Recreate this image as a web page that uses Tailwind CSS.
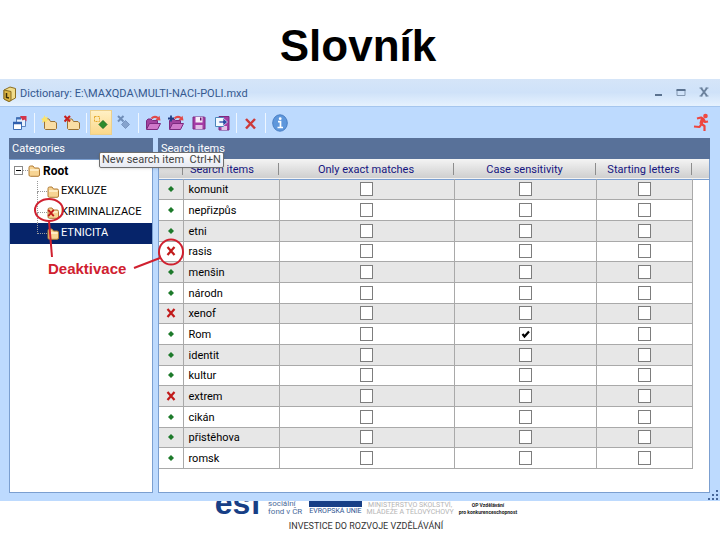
<!DOCTYPE html>
<html lang="cs">
<head>
  <meta charset="UTF-8">
  <meta name="viewport" content="width=device-width, initial-scale=1">
  <title>Slovník</title>

  <!-- Tailwind CSS -->
  <script src="https://cdn.jsdelivr.net/npm/@tailwindcss/browser@4"></script>
</head>
<body class="bg-white text-black font-['Roboto',sans-serif] text-[11px] min-h-screen flex flex-col">

  <!-- Icons used more than once -->
  <svg class="hidden" xmlns="http://www.w3.org/2000/svg">
    <symbol id="icon-folder" viewBox="0 0 12 12">
      <path d="M1 2.500 Q1 1 2.500 1 H5 L6.500 3 H10 Q11.500 3 11.500 4.500 V10 Q11.500 11.300 10 11.300 H2.500 Q1 11.300 1 10 Z" fill="#f7d493" stroke="#b07a35" stroke-width="1"/>
      <path d="M2 5 H10.500" stroke="#fff3d4" stroke-width="1.500"/>
    </symbol>
    <symbol id="icon-cross" viewBox="0 0 10 10">
      <path d="M1.500 1 L8.500 9 M8.500 1 L1.500 9" stroke="#c11a1a" stroke-width="2.200" fill="none"/>
    </symbol>
    <symbol id="icon-open" viewBox="0 0 16 16">
      <path d="M1.500 14 V5.500 L3 4 H6 L7.500 5.500 H12.500 V8" fill="#a243a0" stroke="#7d2a80"/>
      <path d="M1.500 14.500 L4.500 8.500 H15.500 L12.500 14.500 Z" fill="#cf79ca" stroke="#7d2a80"/>
      <path d="M6.500 3.500 Q9.500 0.500 13 3" fill="none" stroke="#e04a4a" stroke-width="2"/>
      <path d="M10.500 5 L15.500 5.500 L14.500 0.800 Z" fill="#e04a4a"/>
    </symbol>
  </svg>

  <header class="h-[79px] pt-5 pr-1">
    <h1 class="font-['Liberation_Sans',sans-serif] font-bold text-[44px] leading-[52px] text-center">Slovník</h1>
  </header>

  <!-- Dictionary window -->
  <main class="relative flex-1 flex flex-col bg-[#bddafe]">

    <!-- Title bar -->
    <div class="h-7 flex items-center pt-[2px] pl-[3px] pr-[10px] border-b border-[#a5c6ee] bg-linear-to-b from-[#d5e5f8] via-[#cfe2f9] to-[#e6f2fe] text-[#35598f]">
      <svg class="w-[13px] h-4" viewBox="0 0 13 16" aria-hidden="true">
        <path d="M1 4 L7 1 L12.500 2.500 V12 L6 15.500 L1 13 Z" fill="#f0dc8a" stroke="#8a6d22"/>
        <path d="M1 4 L8 5.500 V14.500 L6 15.500 L1 13 Z" fill="#dcb545" stroke="#8a6d22"/>
        <path d="M3.500 7 V11.500 L6 12" fill="none" stroke="#3a2d0a" stroke-width="1.500"/>
      </svg>
      <span class="ml-1 text-[11px] leading-4">Dictionary: E:\MAXQDA\MULTI-NACI-POLI.mxd</span>
      <div class="ml-auto flex gap-[11px] pb-1">
        <button class="w-3 h-3" aria-label="Minimize">
          <svg viewBox="0 0 12 12"><path d="M3 9 H10" stroke="#5b728f" stroke-width="2"/></svg>
        </button>
        <button class="w-3 h-3" aria-label="Maximize">
          <svg viewBox="0 0 12 12"><path d="M2 4 H10 V9.500 H2 Z" fill="none" stroke="#8397b0"/><path d="M1.500 4 H10.500" stroke="#5b728f" stroke-width="2"/></svg>
        </button>
        <button class="w-3 h-3" aria-label="Close">
          <svg viewBox="0 0 12 12"><path d="M3 2 L9 10 M9 2 L3 10" stroke="#6b819c" stroke-width="2"/><path d="M1.500 2 H4.500 M7.500 2 H10.500 M1.500 10 H4.500 M7.500 10 H10.500" stroke="#6b819c"/></svg>
        </button>
      </div>
    </div>

    <!-- Toolbar -->
    <div class="h-[31px] flex items-center gap-px pl-[9px] pr-[11px]">
      <button class="w-[22px] h-6 grid place-items-center" aria-label="Windows">
        <svg class="w-4 h-4" viewBox="0 0 16 16">
          <path d="M4.500 2.500 H13.500 V11.500 H4.500 Z" fill="#e8f1fc" stroke="#5b83c0"/><path d="M4 3.500 H9" stroke="#3f6fb5" stroke-width="2"/>
          <path d="M1.500 7.500 H9.500 V14.500 H1.500 Z" fill="#fff" stroke="#3f6fb5"/><path d="M1 8 H10" stroke="#2f5fae" stroke-width="2.500"/>
          <path d="M8 1 H14.500 V6.500 L12.500 4.500 L10.500 5.500 Z" fill="#d3344a"/>
        </svg>
      </button>
      <span class="w-px h-5 mx-[2px] bg-[#eef6ff]"></span>
      <button class="w-[22px] h-6 grid place-items-center" aria-label="New category">
        <svg class="w-4 h-4" viewBox="0 0 16 16">
          <path d="M3.500 5.500 L4.500 4 H8 L9.500 6.500 H14 L15.500 8 V13.500 L14.500 14.500 H4.500 L3.500 13.500 Z" fill="#f9dda5" stroke="#9a7134"/>
          <path d="M3.500 0 L4.500 2.500 L7 1.500 L6 4 L8 5 L5.500 6 L5.500 8 L3.500 6.500 L1 8 L1.800 5.500 L0 4 L2.300 3 Z" fill="#fbe36c"/>
        </svg>
      </button>
      <button class="w-[22px] h-6 grid place-items-center" aria-label="Delete category">
        <svg class="w-4 h-4" viewBox="0 0 16 16">
          <path d="M3.500 5.500 L4.500 4 H8 L9.500 6.500 H14 L15.500 8 V13.500 L14.500 14.500 H4.500 L3.500 13.500 Z" fill="#f9dda5" stroke="#9a7134"/>
          <path d="M0.500 1 L6 6.500 M6 1 L0.500 6.500" stroke="#c8201f" stroke-width="2.200"/>
        </svg>
      </button>
      <span class="w-px h-5 mx-[2px] bg-[#eef6ff]"></span>
      <button class="w-[22px] h-[25px] grid place-items-center border border-[#ecd08c] bg-linear-to-b from-[#fff0c4] to-[#fbd88a]" aria-label="New search item">
        <svg class="w-4 h-4" viewBox="0 0 16 16">
          <path d="M1.500 1.500 H6.500 V6.500 H1.500 Z" fill="none" stroke="#e5a92c" stroke-dasharray="2 1"/>
          <path d="M10 5.500 L14 9.500 L10 13.500 L6 9.500 Z" fill="#2c8c2c" stroke="#1c6e22"/>
        </svg>
      </button>
      <button class="w-[22px] h-6 grid place-items-center" aria-label="Delete search item">
        <svg class="w-4 h-4" viewBox="0 0 16 16">
          <path d="M2 1 L7.500 6.500 M7.500 1 L2 6.500" stroke="#6f8db8" stroke-width="2"/>
          <path d="M9.500 5.500 L13.500 9.500 L9.500 13.500 L5.500 9.500 Z" fill="#86a3cd" stroke="#7894c0"/>
        </svg>
      </button>
      <span class="w-px h-5 mx-[2px] bg-[#eef6ff]"></span>
      <button class="w-[22px] h-6 grid place-items-center" aria-label="Open dictionary">
        <svg class="w-4 h-4"><use href="#icon-open"/></svg>
      </button>
      <button class="w-[22px] h-6 grid place-items-center" aria-label="Add dictionary">
        <svg class="w-4 h-4" viewBox="0 0 16 16">
          <use href="#icon-open"/>
          <path d="M0 3.500 H6 M3 0.500 V6.500" stroke="#1f3f86" stroke-width="1.800"/>
        </svg>
      </button>
      <button class="w-[22px] h-6 grid place-items-center" aria-label="Save">
        <svg class="w-4 h-4" viewBox="0 0 16 16">
          <path d="M2 2 H13.500 L14 2.500 V14 H2 Z" fill="#a53ca6" stroke="#7d2a80"/>
          <path d="M4.500 2 H11.500 V7.500 H4.500 Z" fill="#f7ecf8"/><path d="M9 2.500 H10.500 V5.500 H9 Z" fill="#6a1670"/>
          <path d="M4.500 10 H11.500 V14 H4.500 Z" fill="#e3c0e6"/>
        </svg>
      </button>
      <button class="w-[22px] h-6 grid place-items-center" aria-label="Save as">
        <svg class="w-4 h-4" viewBox="0 0 16 16">
          <path d="M5 1.500 H15 V15 H5 Z" fill="#a53ca6" stroke="#7d2a80"/>
          <path d="M7.500 11 H13 V15 H7.500 Z" fill="#e3c0e6"/>
          <path d="M1.500 2.500 H9.500 V11.500 H1.500 Z" fill="#f5faff" stroke="#4b86b9"/>
          <path d="M5 6 H9 V3 L13.500 7 L9 11 V8 H5 Z" fill="#2c4ba4" stroke="#e8f1fc" stroke-width="0.700"/>
        </svg>
      </button>
      <span class="w-px h-5 mx-[2px] bg-[#eef6ff]"></span>
      <button class="w-[22px] h-6 grid place-items-center" aria-label="Delete">
        <svg class="w-4 h-4" viewBox="0 0 16 16"><path d="M3 4 L12 13.500 M12 4 L3 13.500" stroke="#cc3a3a" stroke-width="2.500"/></svg>
      </button>
      <span class="w-px h-5 mx-[2px] bg-[#eef6ff]"></span>
      <button class="w-[22px] h-6 grid place-items-center" aria-label="Info">
        <svg class="w-4 h-[18px]" viewBox="0 0 16 18">
          <ellipse cx="8" cy="9" rx="7.300" ry="8.200" fill="#5e97dc" stroke="#4a7fc4"/>
          <circle cx="8.200" cy="4.700" r="1.400" fill="#fff"/>
          <path d="M6 7.700 H8.500 V13.500 M5.500 13.500 H11" stroke="#fff" stroke-width="1.700" fill="none"/>
        </svg>
      </button>
      <button class="ml-auto w-4 h-5" aria-label="Run">
        <svg viewBox="0 0 16 20">
          <circle cx="12.500" cy="3" r="2.300" fill="#f04a42"/>
          <path d="M4 5.500 L8 4.500 L10.500 6 L8.500 11 L11.500 13 L11.500 18 M10.500 6 L12 9 L15 8.500 M8.500 11 L6.500 14 L1 13.500" stroke="#ee453e" stroke-width="2.200" fill="none" stroke-linejoin="round"/>
          <path d="M9.500 6 L8 11" stroke="#ee453e" stroke-width="3.500"/>
        </svg>
      </button>
    </div>

    <!-- Panels -->
    <div class="flex-1 flex gap-[5px] pl-[9px] pr-[10px] pb-2">

      <!-- Category tree -->
      <section class="w-36 shrink-0 flex flex-col">
        <h2 class="h-[21px] pl-[3px] leading-[21px] text-white bg-[#587199]">Categories</h2>
        <div class="flex-1 bg-white border border-[#7b9fd0]">
          <div class="h-[21px] flex items-center pl-1 font-bold text-[12px]">
            <span class="w-[9px] h-[9px] grid place-items-center border border-[#8a8a8a]"><span class="w-[5px] h-px bg-black"></span></span>
            <span class="w-[5px] border-t border-dotted border-[#999]"></span>
            <svg class="w-3 h-3"><use href="#icon-folder"/></svg>
            <span class="ml-[3px]">Root</span>
          </div>
          <ul id="category-list"></ul>
        </div>
      </section>

      <!-- Search items -->
      <section class="flex-1 flex flex-col">
        <h2 class="h-[21px] pl-[3px] leading-[21px] text-white bg-[#587199]">Search items</h2>
        <div class="flex-1 bg-white border border-t-0 border-[#7b9fd0]">
          <table class="w-full h-[310px] table-fixed border-collapse">
            <colgroup>
              <col class="w-6">
              <col class="w-[96px]">
              <col class="w-[175px]">
              <col class="w-[142px]">
              <col class="w-[96px]">
              <col>
            </colgroup>
            <thead class="h-5 bg-linear-to-b from-[#f4f4f4] to-[#cfcfcf] text-[#15157f] border-b border-[#7b9fd0]">
              <tr>
                <th class="p-0"><div class="h-3 border-r border-[#8d8d8d]"></div></th>
                <th class="p-0 font-normal"><div class="h-3 leading-[14px] pl-[7px] text-left border-r border-[#8d8d8d]">Search items</div></th>
                <th class="p-0 font-normal"><div class="h-3 leading-[14px] border-r border-[#8d8d8d]">Only exact matches</div></th>
                <th class="p-0 font-normal"><div class="h-3 leading-[14px] border-r border-[#8d8d8d]">Case sensitivity</div></th>
                <th class="p-0 font-normal"><div class="h-3 leading-[14px] border-r border-[#8d8d8d]">Starting letters</div></th>
                <th class="p-0"></th>
              </tr>
            </thead>
            <tbody id="item-list"></tbody>
          </table>
        </div>
      </section>
    </div>

    <!-- Tooltip of the highlighted button -->
    <div role="tooltip" class="absolute left-[99px] top-[73px] h-4 px-[2px] leading-[14px] whitespace-pre text-[#444] border border-[#6e6e6e] rounded-xs bg-linear-to-b from-white to-[#e6e9f2] shadow-sm">New search item  Ctrl+N</div>

    <!-- Red annotation over the window -->
    <div class="absolute left-0 top-0 pointer-events-none">
      <svg class="w-[200px] h-[200px]" viewBox="0 0 200 200" fill="none" stroke="#d0202f" stroke-width="2" aria-hidden="true">
        <ellipse cx="49" cy="131" rx="14" ry="11"/>
        <path d="M49 142 L52 178"/>
        <ellipse cx="171" cy="173" rx="12" ry="12.500"/>
        <path d="M134 189 L160 179"/>
      </svg>
      <span class="absolute left-12 top-[181px] leading-[18px] font-['Liberation_Sans',sans-serif] font-bold text-[15px] text-[#d0202f]">Deaktivace</span>
    </div>

    <!-- Resize grip -->
    <svg class="absolute right-0 bottom-0 w-3 h-3" viewBox="0 0 12 12" fill="#46669a" aria-hidden="true">
      <path d="M8 1h2v2h-2z M4 5h2v2h-2z M8 5h2v2h-2z M0 9h2v2h-2z M4 9h2v2h-2z M8 9h2v2h-2z"/>
    </svg>
  </main>

  <!-- Sponsor strip -->
  <footer class="h-[39px] pl-3 overflow-hidden">
    <div class="h-[15px] flex items-end justify-center gap-[5px] overflow-hidden">
      <div class="mr-[2px] text-[32px] leading-[30px] -mb-[2px] font-['Liberation_Sans',sans-serif] font-bold text-[#173f86]">esf</div>
      <div class="mr-[2px] text-[8px] leading-2 text-[#4a6a9a]">sociální<br>fond v ČR</div>
      <div class="text-[7px] leading-[9px] text-[#2c5390]">
        <div class="h-5 bg-[#173f86]"></div>
        EVROPSKÁ UNIE
      </div>
      <div class="text-[7px] leading-[7px] text-center text-[#b4b4b4]">MINISTERSTVO ŠKOLSTVÍ,<br>MLÁDEŽE A TĚLOVÝCHOVY</div>
      <div class="text-[5px] leading-[7px] font-bold text-center text-[#222]">OP Vzdělávání<br>pro konkurenceschopnost</div>
    </div>
    <p class="mt-1 text-[9px] leading-3 text-center text-[#333]">INVESTICE DO ROZVOJE VZDĚLÁVÁNÍ</p>
  </footer>

  <script>
    const categories = [
      { name: 'EXKLUZE' },
      { name: 'KRIMINALIZACE', inactive: true },
      { name: 'ETNICITA', selected: true }
    ];

    const items = [
      { name: 'komunit' },
      { name: 'nepřizpůs' },
      { name: 'etni' },
      { name: 'rasis', inactive: true },
      { name: 'menšin' },
      { name: 'národn' },
      { name: 'xenof', inactive: true },
      { name: 'Rom', caseSensitive: true },
      { name: 'identit' },
      { name: 'kultur' },
      { name: 'extrem', inactive: true },
      { name: 'cikán' },
      { name: 'přistěhova' },
      { name: 'romsk' }
    ];

    // Category tree, the vertical line stops at the last category
    document.getElementById('category-list').innerHTML = categories.map((category, i) => `
      <li class="h-[21px] flex items-center pl-[27px] ${category.selected ? 'bg-[#06246a] text-white' : ''}">
        <span class="w-[10px] h-full flex flex-col">
          <span class="h-[11px] border-l border-b border-dotted border-[#999]"></span>
          <span class="flex-1 ${i < categories.length - 1 ? 'border-l border-dotted border-[#999]' : ''}"></span>
        </span>
        <span class="relative w-3 h-3">
          <svg class="w-3 h-3"><use href="#icon-folder"/></svg>
          ${category.inactive ? '<svg class="absolute left-0 top-[2px] w-2 h-2"><use href="#icon-cross"/></svg>' : ''}
        </span>
        <span class="ml-[2px]">${category.name}</span>
      </li>
    `).join('');

    // One checkbox cell, the tick is drawn over the box
    const checkCell = (label, checked) => `
      <td class="p-0 border-r border-b border-[#a9a9a9]">
        <label class="grid place-items-center">
          <input type="checkbox" aria-label="${label}" ${checked ? 'checked' : ''} class="peer col-start-1 row-start-1 appearance-none w-[13px] h-[14px] border border-[#7d7d7d] bg-white">
          <svg class="hidden peer-checked:block col-start-1 row-start-1 w-[9px] h-[9px] pointer-events-none" viewBox="0 0 9 9"><path d="M1.500 4 L3.500 6.500 L8 1.500" stroke="#000" stroke-width="2.200" fill="none"/></svg>
        </label>
      </td>
    `;

    // Search item rows
    document.getElementById('item-list').innerHTML = items.map((item, i) => `
      <tr class="leading-4 ${i % 2 ? '' : 'bg-[#e7e7e7]'}">
        <td class="p-0 border-r border-b border-[#a9a9a9]">
          ${item.inactive
            ? '<svg class="w-[10px] h-[10px] mx-auto"><use href="#icon-cross"/></svg>'
            : '<svg class="w-[6px] h-[6px] mx-auto" viewBox="0 0 6 6"><path d="M3 0 L6 3 L3 6 L0 3 Z" fill="#1d7a2b"/></svg>'}
        </td>
        <td class="pt-[2px] pb-0 pl-[5px] pr-0 border-r border-b border-[#a9a9a9]">${item.name}</td>
        ${checkCell('Only exact matches', false)}
        ${checkCell('Case sensitivity', item.caseSensitive)}
        ${checkCell('Starting letters', false)}
        <td class="p-0 bg-white"></td>
      </tr>
    `).join('');
  </script>

</body>
</html>
